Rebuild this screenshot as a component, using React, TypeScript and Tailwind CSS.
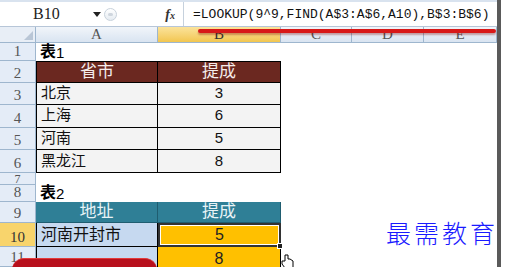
const serif = { fontFamily: '"Liberation Serif", "DejaVu Serif", serif' };
const cell = { fontFamily: '"Liberation Sans", "Noto Sans CJK SC", sans-serif' };

type RowProps = {
  n: string;
  h: string;
  active?: boolean;
  children?: React.ReactNode;
};

function Row({ n, h, active, children }: RowProps) {
  return (
    <div className={`flex ${h}`}>
      <div
        style={serif}
        className={`w-[36px] shrink-0 border-r border-b border-[#9eb6ce] flex items-end justify-center pb-[1px] text-[15px] leading-none overflow-hidden ${
          active ? "bg-[#f8d46c] text-[#333]" : "bg-[#e4ecf7] text-[#555]"
        }`}
      >
        {n}
      </div>
      {children}
    </div>
  );
}

function Title({ num }: { num: string }) {
  return (
    <div style={cell} className="w-[245px] pl-[4px] flex items-end text-[16px] leading-none pb-[1px] text-black">
      <span className="font-bold">表</span>
      <span className="text-[15px]">{num}</span>
    </div>
  );
}

function DataRow({ n, h, a, b }: { n: string; h: string; a: string; b: string }) {
  return (
    <Row n={n} h={h}>
      <div style={cell} className="w-[122px] bg-[#f3f3f3] border-l border-r border-b border-black pl-[4px] flex items-center text-[15px] text-[#111]">
        {a}
      </div>
      <div style={cell} className="w-[123px] bg-[#f3f3f3] border-r border-b border-black flex items-center justify-center text-[15px] text-[#111]">
        {b}
      </div>
    </Row>
  );
}

export default function App() {
  const headers = [
    { l: "A", w: "w-[122px]", on: false },
    { l: "B", w: "w-[123px]", on: true },
    { l: "C", w: "w-[71px]", on: false },
    { l: "D", w: "w-[72px]", on: false },
    { l: "E", w: "w-[73px]", on: false },
  ];

  return (
    <div className="relative w-[508px] h-[267px] overflow-hidden bg-white">
      <div className="w-[501px] h-full border-r-[4px] border-[#5a5a5a] flex flex-col">
        <div className="h-[3px] bg-[#d9e3ef]" />
        {/* formula bar */}
        <div className="h-[25px] flex items-stretch bg-white border-b border-[#b7c6d8]">
          <div style={serif} className="w-[90px] flex items-center pl-[33px] text-[16px] text-[#222]">
            B10
          </div>
          <div className="w-[14px] flex items-center justify-center">
            <svg width="8" height="5" viewBox="0 0 8 5">
              <path d="M0 0H8L4 5Z" fill="#222" />
            </svg>
          </div>
          <div className="w-[20px] flex items-center">
            <div className="w-[13px] h-[13px] rounded-full border border-[#c8d2dc] bg-gradient-to-b from-white to-[#e6ecf2] flex items-center justify-center">
              <div className="w-[5px] h-[3px] rounded-full bg-[#cfd6de]" />
            </div>
          </div>
          <div className="w-[59px] flex items-center justify-end pr-[8px]">
            <span style={serif} className="italic font-bold text-[14px] text-[#333]">
              f<span className="text-[10px]">x</span>
            </span>
          </div>
          <div
            style={{ fontFamily: '"Liberation Mono", "DejaVu Sans Mono", monospace' }}
            className="flex-1 border-l border-[#c6d1dd] pl-[9px] flex items-center text-[13px] text-[#111] whitespace-nowrap"
          >
            =LOOKUP(9^9,FIND(A$3:A$6,A10),B$3:B$6)
          </div>
        </div>
        {/* column headers */}
        <div className="flex h-[18px]" style={serif}>
          <div className="w-[36px] border-r border-b border-[#9eb6ce] bg-[#e8eef6] flex items-end justify-end p-[2px]">
            <svg width="9" height="9" viewBox="0 0 9 9">
              <path d="M9 0V9H0Z" fill="#b9c6d6" />
            </svg>
          </div>
          {headers.map((c) => (
            <div
              key={c.l}
              className={`${c.w} border-r border-b border-[#9eb6ce] flex items-center justify-center text-[15px] leading-none ${
                c.on ? "bg-gradient-to-b from-[#fbe39a] to-[#f2c64e] text-[#333]" : "bg-gradient-to-b from-[#f1f5fa] to-[#d9e4f1] text-[#555]"
              }`}
            >
              {c.l}
            </div>
          ))}
        </div>
        <Row n="1" h="h-[22px]">
          <Title num="1" />
        </Row>
        <Row n="2" h="h-[22px]">
          <div style={cell} className="w-[122px] bg-[#6b2820] border border-black flex items-center justify-center text-[17px] text-[#f4eceb]">
            省市
          </div>
          <div style={cell} className="w-[123px] bg-[#6b2820] border-t border-r border-b border-black flex items-center justify-center text-[17px] text-[#f4eceb]">
            提成
          </div>
        </Row>
        <DataRow n="3" h="h-[22px]" a="北京" b="3" />
        <DataRow n="4" h="h-[23px]" a="上海" b="6" />
        <DataRow n="5" h="h-[22px]" a="河南" b="5" />
        <DataRow n="6" h="h-[26px]" a="黑龙江" b="8" />
        <div className="flex h-[12px]">
          <div style={serif} className="w-[36px] shrink-0 border-r border-b border-[#9eb6ce] bg-[#e4ecf7] flex justify-center text-[12px] leading-[12px] text-[#555] overflow-hidden">
            7
          </div>
        </div>
        <Row n="8" h="h-[17px]">
          <Title num="2" />
        </Row>
        <Row n="9" h="h-[21px]">
          <div style={cell} className="w-[122px] bg-[#2f7f96] border-r border-b border-[#1f5d70] flex items-center justify-center text-[17px] text-[#e8f3f6]">
            地址
          </div>
          <div style={cell} className="w-[123px] bg-[#2f7f96] border-r border-b border-[#1f5d70] flex items-center justify-center text-[17px] text-[#e8f3f6]">
            提成
          </div>
        </Row>
        <Row n="10" h="h-[24px]" active>
          <div style={cell} className="w-[122px] bg-[#c6d9f0] border-l border-r border-b border-black pl-[4px] flex items-center text-[16px] text-[#111]">
            河南开封市
          </div>
          <div className="relative w-[123px] bg-white border-2 border-[#333] p-[1px]">
            <div style={cell} className="h-full bg-[#ffc000] flex items-center justify-center text-[16px] text-[#222]">
              5
            </div>
            <div className="absolute -right-[4px] -bottom-[4px] w-[6px] h-[6px] bg-[#222] border border-white" />
          </div>
        </Row>
        <Row n="11" h="h-[22px]">
          <div className="w-[122px] bg-[#c6d9f0] border-l border-r border-black" />
          <div style={cell} className="w-[123px] bg-[#ffc000] border-r border-black flex justify-center pt-[4px] text-[16px] leading-none text-[#222]">
            8
          </div>
        </Row>
      </div>

      {/* watermark */}
      <div
        className="absolute left-[386px] top-[220px] text-[25px] font-light leading-none tracking-[3px] text-[#1a1aff]"
        style={{ fontFamily: '"Noto Sans CJK SC", sans-serif' }}
      >
        最需教育
      </div>

      {/* red marker line */}
      <div className="absolute left-[198px] top-[29px] w-[298px] h-[4px] rounded-full bg-[#d81818] shadow-[0_2px_2px_rgba(120,0,0,0.35)]" />

      {/* red badge at the bottom */}
      <div className="absolute left-[12px] top-[258px] w-[145px] h-[24px] rounded-t-[12px] bg-[#b8101c] border-t border-[#e23a3a]" />

      {/* cursor */}
      <svg className="absolute left-[281px] top-[254px]" width="14" height="14" viewBox="0 0 14 14">
        <path d="M4 1h3v4h2l3 2v7H4L1 10V7h3Z" fill="white" stroke="black" strokeWidth="1" />
      </svg>
    </div>
  );
}
